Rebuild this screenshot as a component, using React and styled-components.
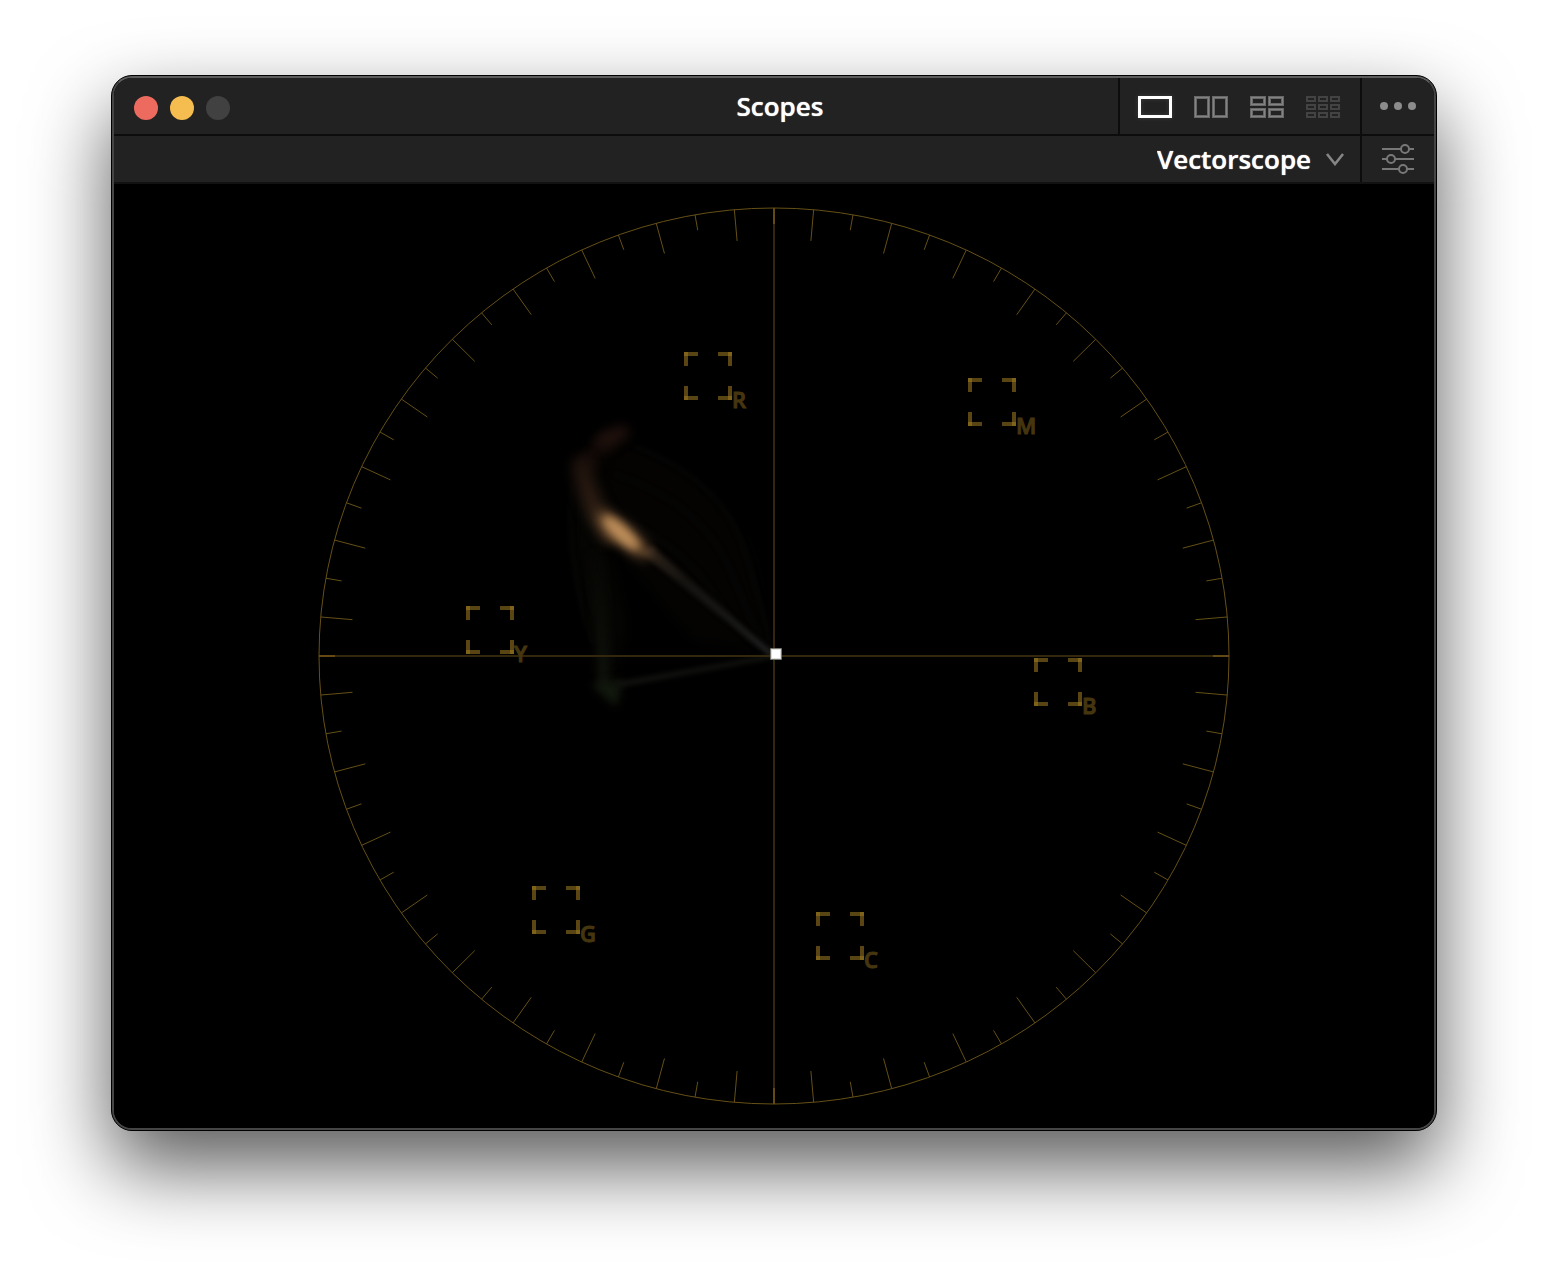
import { useState } from 'react';
import styled, { createGlobalStyle } from 'styled-components';

const GlobalStyle = createGlobalStyle`
    * {
        box-sizing: border-box;
    }

    body {
        margin: 0;
        background: #fff;
        font-family: 'Open Sans', 'Noto Sans', sans-serif;
        color: #fff;
    }
`;

const Desktop = styled.main`
    display: flex;
    min-height: 100vh;
    padding: 75px 111px 147px;
    overflow: hidden;
`;

const Window = styled.section`
    flex: 1;
    display: flex;
    flex-direction: column;
    border: 1px solid #000;
    border-radius: 21px;
    background: #000;
    box-shadow: 0 36px 80px rgba(0, 0, 0, 0.65);
`;

const WindowFrame = styled.div`
    flex: 1;
    display: flex;
    flex-direction: column;
    overflow: hidden;
    border: 2px solid #454545;
    border-top-color: #5c5c5c;
    border-radius: 20px;
`;

const TitleBar = styled.header`
    display: grid;
    grid-template-columns: 328px 1fr 316px;
    height: 58px;
    background: #222;
    border-bottom: 2px solid #0c0c0c;
`;

const TrafficLights = styled.div`
    display: flex;
    align-items: center;
    gap: 12px;
    padding: 4px 0 0 20px;
`;

const Light = styled.button`
    width: 24px;
    height: 24px;
    padding: 0;
    border: 0;
    border-radius: 50%;
    background: ${({ $color }) => $color};
`;

const Title = styled.h1`
    margin: 0;
    font-size: 26px;
    font-weight: 600;
    line-height: 56px;
    text-align: center;
    text-shadow: 0 0 1px #fff;
`;

const Tools = styled.div`
    display: flex;
`;

const LayoutGroup = styled.div`
    flex: 1;
    display: flex;
    align-items: center;
    gap: 18px;
    padding: 2px 16px 0;
    border-left: 2px solid #0c0c0c;
`;

const IconButton = styled.button`
    display: flex;
    align-items: center;
    justify-content: center;
    padding: 0;
    border: 0;
    background: none;
    color: ${({ $color }) => $color || '#787878'};
`;

const LayoutButton = styled(IconButton)`
    width: 38px;
    height: 28px;
    filter: ${({ $active }) => ($active ? 'drop-shadow(0 0 2px #fff2)' : 'none')};
`;

const SideCell = styled.div`
    display: flex;
    align-items: center;
    justify-content: center;
    width: 74px;
    border-left: 2px solid #0c0c0c;
`;

const ScopeBar = styled.div`
    display: flex;
    justify-content: flex-end;
    height: 48px;
    background: #222;
    border-bottom: 2px solid #121212;
`;

const Picker = styled.label`
    position: relative;
    display: flex;
    align-items: center;
`;

const PickerSelect = styled.select`
    height: 46px;
    padding: 0 48px 0 16px;
    border: 0;
    appearance: none;
    background: none;
    color: #fff;
    font-family: inherit;
    font-size: 26px;
    font-weight: 600;
    line-height: 46px;
    text-shadow: 0 0 1px #fff;
`;

const PickerArrow = styled.svg`
    position: absolute;
    right: 14px;
    pointer-events: none;
`;

const ScopeView = styled.div`
    flex: 1;
    display: flex;
    min-height: 0;
    background: #000;
`;

const Graticule = styled.svg`
    display: block;
    width: 100%;
    height: 100%;
`;

const TargetLabel = styled.text`
    font-family: 'Open Sans', 'Noto Sans', sans-serif;
    font-size: 22px;
    font-weight: 600;
    fill: #46360f;
    stroke: #46360f;
    stroke-width: 1px;
`;

const CX = 660;
const CY = 472;
const RX = 455;
const RY = 448;

const TARGETS = [
    { name: 'R', x: 570, y: 168 },
    { name: 'M', x: 854, y: 194 },
    { name: 'Y', x: 352, y: 422 },
    { name: 'B', x: 920, y: 474 },
    { name: 'G', x: 418, y: 702 },
    { name: 'C', x: 702, y: 728 },
];

const BLURS = [
    { id: 'soft', size: 6 },
    { id: 'core', size: 4 },
    { id: 'fine', size: 2 },
];

const LAYOUTS = [
    { name: 'Single view', cols: 1, rows: 1, gap: 0, stroke: 3, color: '#686868' },
    { name: 'Two views', cols: 2, rows: 1, gap: 2, stroke: 3, color: '#686868', core: '#838383' },
    { name: 'Four views', cols: 2, rows: 2, gap: 2, stroke: 3, color: '#686868', core: '#838383' },
    { name: 'Nine views', cols: 3, rows: 3, gap: 2, stroke: 2, color: '#434343' },
];

const LayoutIcon = ({ cols, rows, gap, stroke, core, active }) => {
    const w = (34 - gap * (cols - 1)) / cols;
    const h = (22 - gap * (rows - 1)) / rows;
    const cells = [];
    for (let r = 0; r < rows; r++) {
        for (let c = 0; c < cols; c++) {
            cells.push(
                <rect
                    key={`${r}-${c}`}
                    x={c * (w + gap) + stroke / 2}
                    y={r * (h + gap) + stroke / 2}
                    width={w - stroke}
                    height={h - stroke}
                />
            );
        }
    }
    return (
        <svg width="34" height="22" fill="none" stroke="currentColor">
            <g strokeWidth={stroke}>{cells}</g>
            {core && !active && <g stroke={core} strokeWidth="1">{cells}</g>}
        </svg>
    );
};

const Ticks = () => {
    const ticks = [];
    for (let deg = 5; deg < 360; deg += 5) {
        if (deg % 90 === 0) continue;
        const inner = deg % 10 === 0 ? 0.965 : 0.93;
        const cos = Math.cos((deg * Math.PI) / 180);
        const sin = Math.sin((deg * Math.PI) / 180);
        ticks.push(
            <line
                key={deg}
                x1={CX + RX * cos}
                y1={CY + RY * sin}
                x2={CX + RX * inner * cos}
                y2={CY + RY * inner * sin}
            />
        );
    }
    return <g stroke="#655016" strokeWidth="1">{ticks}</g>;
};

const Target = ({ name, x, y }) => (
    <g transform={`translate(${x} ${y})`}>
        <path
            d="M0 0h14v4H0zM34 0h14v4H34zM0 44h14v4H0zM34 44h14v4H34z"
            fill="#8c6c1e"
            fillOpacity="0.64"
        />
        <path
            d="M0 0h4v14H0zM44 0h4v14h-4zM0 34h4v14H0zM44 34h4v14h-4z"
            fill="#9c7820"
            fillOpacity="0.58"
        />
        <TargetLabel x="48" y="56">{name}</TargetLabel>
    </g>
);

const Trace = () => (
    <g>
        <defs>
            {BLURS.map(({ id, size }) => (
                <filter
                    key={id}
                    id={id}
                    filterUnits="userSpaceOnUse"
                    x="400"
                    y="200"
                    width="300"
                    height="360"
                    colorInterpolationFilters="sRGB"
                >
                    <feGaussianBlur stdDeviation={size} />
                </filter>
            ))}
            <linearGradient id="ray" gradientUnits="userSpaceOnUse" x1="530" y1="366" x2="660" y2="470">
                <stop offset="0" stopColor="#2c2118" />
                <stop offset="0.3" stopColor="#151310" />
                <stop offset="0.7" stopColor="#171716" />
                <stop offset="1" stopColor="#222" />
            </linearGradient>
            <linearGradient id="rise" gradientUnits="userSpaceOnUse" x1="470" y1="280" x2="500" y2="350">
                <stop offset="0" stopColor="#1e120c" />
                <stop offset="0.6" stopColor="#2c1d13" />
                <stop offset="1" stopColor="#4a321e" />
            </linearGradient>
            <linearGradient id="fall" gradientUnits="userSpaceOnUse" x1="480" y1="370" x2="490" y2="500">
                <stop offset="0" stopColor="#070604" />
                <stop offset="1" stopColor="#0f120b" />
            </linearGradient>
        </defs>
        <path d="M470 270Q500 245 535 268Q610 300 640 375L658 468L580 458Q530 400 490 350Z" fill="#040302" filter="url(#soft)" />
        <path d="M462 300Q452 390 484 470L500 500L512 440L490 345Z" fill="#050503" filter="url(#soft)" />
        <g fill="none" stroke="#070706" filter="url(#fine)" strokeWidth="3">
            <path d="M520 262Q610 296 632 370T658 466" />
            <path d="M500 290Q590 320 618 390T658 468" />
            <path d="M490 330Q560 350 600 410T658 468" />
            <path d="M458 300Q450 370 478 460" />
        </g>
        <path d="M474 278Q484 262 494 256" fill="none" stroke="#120a07" strokeWidth="16" strokeLinecap="round" filter="url(#soft)" />
        <path d="M490 257Q500 251 508 249" fill="none" stroke="#21120d" strokeWidth="14" strokeLinecap="round" filter="url(#soft)" />
        <path d="M468 282Q471 306 484 330L497 349" fill="none" stroke="url(#rise)" strokeWidth="20" strokeLinecap="round" filter="url(#soft)" />
        <path d="M482 370Q488 440 490 505" fill="none" stroke="url(#fall)" strokeWidth="12" filter="url(#core)" />
        <path d="M486 503L504 500L500 516Z" fill="#141b0e" stroke="#12180d" strokeWidth="8" filter="url(#core)" />
        <path d="M504 503L500 499L658 471L658 474Z" fill="#12130f" stroke="#0e0f0c" strokeWidth="2" filter="url(#fine)" />
        <path d="M526 368L538 362L660 469L657 473Z" fill="url(#ray)" filter="url(#fine)" />
        <ellipse cx="510" cy="351" rx="34" ry="10" transform="rotate(41 510 351)" fill="#6b4c2f" filter="url(#soft)" />
        <ellipse cx="507" cy="349" rx="23" ry="7" transform="rotate(42 507 349)" fill="#bf8f5a" filter="url(#core)" />
    </g>
);

const Vectorscope = () => (
    <Graticule viewBox="0 0 1320 944" role="img" aria-label="Vectorscope">
        <Trace />
        <path d="M660 24V920M205 472H1115" stroke="#33270d" strokeWidth="2" />
        <path d="M660 24v16M660 904v16M205 472h16M1099 472h16" stroke="#624a12" strokeWidth="2" />
        <ellipse cx={CX} cy={CY} rx={RX} ry={RY} fill="none" stroke="#655016" strokeWidth="1" />
        <Ticks />
        {TARGETS.map((target) => (
            <Target key={target.name} {...target} />
        ))}
        <rect x="656" y="464" width="12" height="12" rx="1" fill="#77776f" />
        <rect x="657" y="465" width="10" height="10" fill="#dcdcd8" />
        <rect x="658" y="466" width="8" height="8" fill="#fff" />
    </Graticule>
);

const App = () => {
    const [layout, setLayout] = useState(0);

    return (
        <>
            <GlobalStyle />
            <Desktop>
                <Window>
                    <WindowFrame>
                        <TitleBar>
                            <TrafficLights>
                                <Light $color="#ed6a5f" aria-label="Close" />
                                <Light $color="#f5bd4f" aria-label="Minimize" />
                                <Light $color="#414141" aria-label="Zoom" />
                            </TrafficLights>
                            <Title>Scopes</Title>
                            <Tools>
                                <LayoutGroup>
                                    {LAYOUTS.map((item, i) => (
                                        <LayoutButton
                                            key={item.name}
                                            aria-label={item.name}
                                            $active={i === layout}
                                            $color={i === layout ? '#fff' : item.color}
                                            onClick={() => setLayout(i)}
                                        >
                                            <LayoutIcon {...item} active={i === layout} />
                                        </LayoutButton>
                                    ))}
                                </LayoutGroup>
                                <SideCell>
                                    <IconButton aria-label="More options">
                                        <svg width="36" height="8" fill="#8c8c8c">
                                            <circle cx="4" cy="4" r="4" />
                                            <circle cx="18" cy="4" r="4" />
                                            <circle cx="32" cy="4" r="4" />
                                        </svg>
                                    </IconButton>
                                </SideCell>
                            </Tools>
                        </TitleBar>
                        <ScopeBar>
                            <Picker>
                                <PickerSelect aria-label="Scope type" defaultValue="Vectorscope">
                                    <option>Vectorscope</option>
                                </PickerSelect>
                                <PickerArrow width="22" height="14" fill="none" stroke="#868686" strokeWidth="2.6">
                                    <path d="M3 2l8 10 8-10" />
                                </PickerArrow>
                            </Picker>
                            <SideCell>
                                <IconButton aria-label="Scope settings">
                                    <svg width="32" height="30" fill="none" stroke="currentColor" strokeWidth="2">
                                        <path d="M0 5h19M27 5h5M0 15h5M13 15h19M0 25h17M25 25h7" />
                                        <circle cx="23" cy="5" r="4" />
                                        <circle cx="9" cy="15" r="4" />
                                        <circle cx="21" cy="25" r="4" />
                                    </svg>
                                </IconButton>
                            </SideCell>
                        </ScopeBar>
                        <ScopeView>
                            <Vectorscope />
                        </ScopeView>
                    </WindowFrame>
                </Window>
            </Desktop>
        </>
    );
};

export default App;
